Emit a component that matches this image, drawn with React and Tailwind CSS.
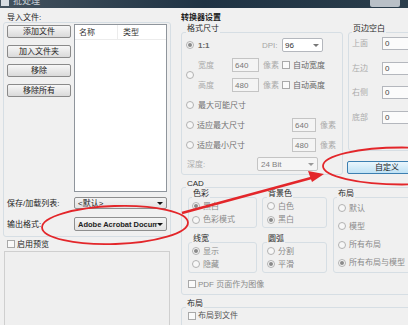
import React from "react";

const Radio = ({ checked }) => (
  <span className="inline-flex items-center justify-center w-[8px] h-[8px] rounded-full border border-[#b2b2b2] bg-[#f7f7f7] shrink-0">
    {checked && <span className="w-[4px] h-[4px] rounded-full bg-[#8a8a8a]" />}
  </span>
);

const Check = () => (
  <span className="inline-block w-[8px] h-[8px] border border-[#a9a9a9] bg-[#fafafa] shrink-0" />
);

function Group({ label, className, children, labelClass }) {
  return (
    <div className={"shrink-0 border border-[#d6dee4] rounded-[3px] " + className}>
      <div className={"-mt-[9px] h-[9px] leading-[9px] w-fit px-[1px] bg-[#f0f0f0] text-[#2a2a2a] whitespace-nowrap " + (labelClass || "ml-[4px]")}>
        {label}
      </div>
      {children}
    </div>
  );
}

const Btn = ({ children }) => (
  <div className="h-[13px] border border-[#8a8a8a] rounded-[2px] bg-linear-to-b from-[#f7f7f7] to-[#dadada] flex items-center justify-center text-[#222] whitespace-nowrap">
    {children}
  </div>
);

const Arrow = ({ color }) => (
  <span className={"shrink-0 w-0 h-0 border-l-[3px] border-r-[3px] border-t-[3px] border-l-transparent border-r-transparent " + color} />
);

export default function App() {
  return (
    <div className="relative w-[408px] h-[325px] overflow-hidden bg-[#f0f0f0] text-[8px] leading-[9px] whitespace-nowrap font-['Liberation_Sans','Noto_Sans_CJK_SC',sans-serif]">
      {/* title bar */}
      <div className="h-[8px] overflow-hidden flex bg-linear-to-r from-[#44525e] via-[#1f3344] to-[#2a3d4b]">
        <div className="w-[8px] h-[6px] bg-[#d8dde2] ml-[1px] shrink-0" />
        <div className="ml-[4px] -mt-[4px] text-[9px] leading-[10px] text-[#c9d0d6]">批处理</div>
        <div className="flex-1" />
        <div className="w-[30px] h-[7px] bg-[#b9c0c7] rounded-b-[2px] mr-[8px] shrink-0" />
      </div>

      <div className="flex pl-[3px]">
        {/* left column */}
        <div className="w-[168px] flex flex-col shrink-0">
          <div className="mt-[5px] h-[9px] ml-[4px] text-[#222]">导入文件:</div>
          <div className="h-[215px] border border-[#d6dee4] rounded-[3px] flex flex-col">
            <div className="flex pt-[1px] pl-[3px]">
              <div className="flex flex-col gap-[6.7px] mt-[1px] w-[64px] shrink-0">
                <Btn>添加文件</Btn>
                <Btn>加入文件夹</Btn>
                <Btn>移除</Btn>
                <Btn>移除所有</Btn>
              </div>
              <div className="ml-[3px] w-[93px] h-[168px] border border-[#8f959c] bg-white shrink-0">
                <div className="h-[15px] flex items-center border-b border-[#ececec] text-[#333]">
                  <div className="w-[43px] h-full flex items-center pl-[4px] border-r border-[#ececec]">名称</div>
                  <div className="pl-[5px]">类型</div>
                </div>
              </div>
            </div>
            <div className="flex items-center mt-[5px] h-[12px] pl-[3px]">
              <div className="w-[67px] shrink-0 text-[#222]">保存/加载列表:</div>
              <div className="w-[93px] h-[12px] shrink-0 border border-[#8e8e8e] rounded-[2px] bg-linear-to-b from-[#f4f4f4] to-[#e2e2e2] flex items-center pl-[3px] pr-[3px] text-[#222]">
                <span className="flex-1">&lt;默认&gt;</span>
                <Arrow color="border-t-[#111]" />
              </div>
            </div>
            <div className="flex items-center mt-[8px] h-[14px] pl-[3px]">
              <div className="w-[67px] shrink-0 text-[#222]">输出格式:</div>
              <div className="w-[93px] h-[14px] shrink-0 border border-[#8e8e8e] rounded-[2px] bg-linear-to-b from-[#f4f4f4] to-[#e2e2e2] flex items-center pl-[3px] pr-[3px] text-[#222] font-bold">
                <span className="flex-1 overflow-hidden text-[7.5px]">Adobe Acrobat Docum</span>
                <Arrow color="border-t-[#111]" />
              </div>
            </div>
          </div>
          <div className="mt-[3px] h-[8px] flex items-center ml-[4px]">
            <Check />
            <span className="ml-[2px] text-[#222]">启用预览</span>
          </div>
          <div className="mt-[3px] ml-[1px] w-[166px] h-[80px] border border-[#cfcfcf] bg-[#efefef]" />
        </div>

        {/* right column */}
        <div className="ml-[6px] w-[260px] flex flex-col shrink-0">
          <div className="mt-[5px] h-[9px] ml-[4px] text-[#222] font-bold">转换器设置</div>
          <div className="mt-[10px] ml-[4px] flex items-start">
            <Group label="格式尺寸" className="w-[162px] pb-[3px]">
              <div className="mt-[5px] h-[14px] flex items-center pl-[4px]">
                <div className="w-[76px] shrink-0 flex items-center">
                  <Radio checked />
                  <span className="ml-[4px] text-[#666] font-bold">1:1</span>
                </div>
                <span className="w-[20px] shrink-0 text-[#a6a6a6]">DPI:</span>
                <div className="w-[41px] h-[14px] shrink-0 border border-[#b4b7bd] rounded-[2px] bg-white flex items-center pl-[2px] pr-[3px] text-[#333]">
                  <span className="flex-1">96</span>
                  <Arrow color="border-t-[#777]" />
                </div>
              </div>
              <div className="mt-[6px] flex items-center pl-[4px]">
                <Radio />
                <div className="ml-[4px] flex flex-col gap-[6px]">
                  {[["宽度", "640", "自动宽度"], ["高度", "480", "自动高度"]].map(([a, b, c]) => (
                    <div key={a} className="h-[14px] flex items-center">
                      <span className="w-[34px] shrink-0 text-[#ababab]">{a}</span>
                      <div className="w-[27px] h-[14px] shrink-0 border border-[#c4c4c4] bg-[#f4f4f4] flex items-center pl-[2px] text-[#777]">{b}</div>
                      <span className="ml-[4px] w-[19px] shrink-0 text-[#ababab]">像素</span>
                      <Check />
                      <span className="ml-[3px] text-[#666]">{c}</span>
                    </div>
                  ))}
                </div>
              </div>
              <div className="mt-[6px] h-[14px] flex items-center pl-[4px]">
                <Radio />
                <span className="ml-[4px] text-[#707070]">最大可能尺寸</span>
              </div>
              {[["适应最大尺寸", "640"], ["适应最小尺寸", "480"]].map(([a, b]) => (
                <div key={a} className="mt-[6px] h-[14px] flex items-center pl-[4px]">
                  <div className="w-[106px] shrink-0 flex items-center">
                    <Radio />
                    <span className="ml-[3px] text-[#707070]">{a}</span>
                  </div>
                  <div className="w-[24px] h-[14px] shrink-0 border border-[#c4c4c4] bg-[#f4f4f4] flex items-center pl-[2px] text-[#777]">{b}</div>
                  <span className="ml-[4px] text-[#ababab]">像素</span>
                </div>
              ))}
              <div className="mt-[5px] h-[14px] flex items-center pl-[5px]">
                <span className="w-[70px] shrink-0 text-[#ababab]">深度:</span>
                <div className="w-[61px] h-[14px] shrink-0 border border-[#c4c4c4] rounded-[2px] bg-[#f5f5f5] flex items-center pl-[3px] pr-[3px] text-[#808080]">
                  <span className="flex-1">24 Bit</span>
                  <Arrow color="border-t-[#999]" />
                </div>
              </div>
            </Group>

            <div className="ml-[5px] flex flex-col shrink-0">
              <Group label="页边空白" className="w-[70px] h-[119px]" labelClass="ml-[3px]">
                <div className="mt-[4px] flex flex-col gap-[11.5px]">
                  {["上面", "左边", "右侧", "底部"].map((a) => (
                    <div key={a} className="h-[13px] flex items-center pl-[3px]">
                      <span className="w-[30px] shrink-0 text-[#ababab]">{a}</span>
                      <div className="w-[40px] h-[13px] border border-[#b4b7bd] bg-[#fbfbfb] flex items-center pl-[2px] text-[#444] shrink-0">0</div>
                    </div>
                  ))}
                </div>
              </Group>
              <div className="mt-[10px] -ml-[1px] w-[80px] h-[13px] shrink-0 border border-[#3c7fb1] rounded-[2px] bg-linear-to-b from-[#eaf6fd] to-[#bfe2f5] flex items-center justify-center text-[#222]">
                自定义
              </div>
            </div>
          </div>

          <Group label="CAD" className="mt-[12px] ml-[4px] w-[240px] h-[108px]">
            <div className="mt-[9px] pl-[6px] flex items-start">
              <div className="flex flex-col shrink-0">
                <div className="flex">
                  <Group label="色彩" className="w-[69px] h-[31px]" labelClass="ml-[3px]">
                    <div className="mt-[3px] flex flex-col gap-[3.5px] pl-[3px]">
                      <div className="h-[10px] flex items-center"><Radio checked /><span className="ml-[3px] text-[#8a8a8a]">黑白</span></div>
                      <div className="h-[10px] flex items-center"><Radio /><span className="ml-[3px] text-[#8a8a8a]">色彩模式</span></div>
                    </div>
                  </Group>
                  <Group label="背景色" className="ml-[5px] w-[65px] h-[31px]" labelClass="ml-[4px]">
                    <div className="mt-[3px] flex flex-col gap-[3.5px] pl-[4px]">
                      <div className="h-[10px] flex items-center"><Radio /><span className="ml-[3px] text-[#8a8a8a]">白色</span></div>
                      <div className="h-[10px] flex items-center"><Radio checked /><span className="ml-[3px] text-[#8a8a8a]">黑白</span></div>
                    </div>
                  </Group>
                </div>
                <div className="mt-[14px] flex">
                  <Group label="线宽" className="w-[69px] h-[31px]" labelClass="ml-[3px]">
                    <div className="mt-[3px] flex flex-col gap-[3px] pl-[3px]">
                      <div className="h-[10px] flex items-center"><Radio checked /><span className="ml-[3px] text-[#8a8a8a]">显示</span></div>
                      <div className="h-[10px] flex items-center"><Radio /><span className="ml-[3px] text-[#8a8a8a]">隐藏</span></div>
                    </div>
                  </Group>
                  <Group label="圆弧" className="ml-[5px] w-[65px] h-[31px]" labelClass="ml-[4px]">
                    <div className="mt-[3px] flex flex-col gap-[3px] pl-[4px]">
                      <div className="h-[10px] flex items-center"><Radio /><span className="ml-[3px] text-[#8a8a8a]">分割</span></div>
                      <div className="h-[10px] flex items-center"><Radio checked /><span className="ml-[3px] text-[#8a8a8a]">平滑</span></div>
                    </div>
                  </Group>
                </div>
              </div>
              <Group label="布局" className="ml-[6px] w-[80px] h-[76px]" labelClass="ml-[3px]">
                <div className="mt-[5px] flex flex-col gap-[8.3px] pl-[4px]">
                  <div className="h-[10px] flex items-center"><Radio /><span className="ml-[3px] text-[#8a8a8a]">默认</span></div>
                  <div className="h-[10px] flex items-center"><Radio /><span className="ml-[3px] text-[#8a8a8a]">模型</span></div>
                  <div className="h-[10px] flex items-center"><Radio /><span className="ml-[3px] text-[#8a8a8a]">所有布局</span></div>
                  <div className="h-[10px] flex items-center"><Radio checked /><span className="ml-[3px] text-[#8a8a8a]">所有布局与模型</span></div>
                </div>
              </Group>
            </div>
            <div className="mt-[7px] h-[8px] pl-[6px] flex items-center">
              <Check />
              <span className="ml-[2px] text-[#8a8a8a]">PDF 页面作为图像</span>
            </div>
          </Group>

          <Group label="布局" className="mt-[12px] ml-[4px] w-[240px] h-[40px]">
            <div className="mt-[3px] h-[9px] pl-[6px] flex items-center">
              <Check />
              <span className="ml-[2px] text-[#555]">布局到文件</span>
            </div>
          </Group>
        </div>
      </div>

      {/* red annotations */}
      <svg className="absolute left-0 top-0 pointer-events-none" width="408" height="325" viewBox="0 0 408 325">
        <ellipse cx="115" cy="225" rx="73" ry="19" fill="none" stroke="#e3262a" strokeWidth="1.8" transform="rotate(-2 115 225)" />
        <ellipse cx="402" cy="166" rx="79" ry="18.5" fill="none" stroke="#e3262a" strokeWidth="1.8" />
        <line x1="182" y1="213" x2="313" y2="177.5" stroke="#e3262a" strokeWidth="2.6" />
        <polygon points="324,174 308,171 312,182" fill="#e3262a" />
      </svg>
    </div>
  );
}
